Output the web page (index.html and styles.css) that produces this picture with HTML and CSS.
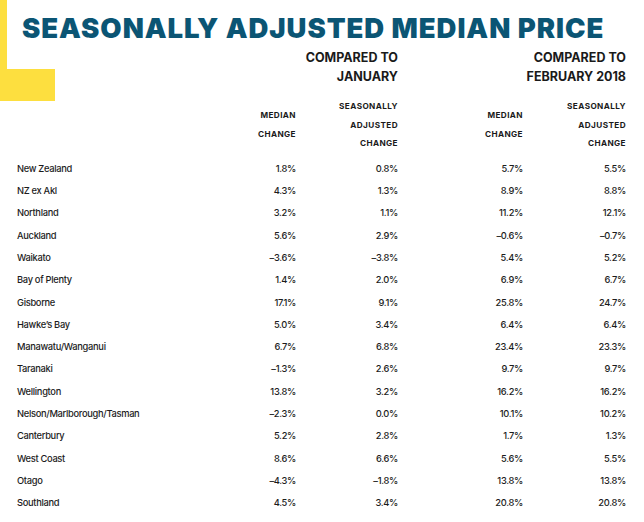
FILE: index.html
```html
<!DOCTYPE html>
<html lang="en">
<head>
<meta charset="utf-8">
<title>Seasonally adjusted median price</title>
<link rel="stylesheet" href="styles.css">
</head>
<body>
<main class="page">
  <div class="accent"></div>
  <h1 class="title">SEASONALLY ADJUSTED MEDIAN PRICE</h1>
  <div class="table">
    <div class="cell"></div>
    <div class="group g1">COMPARED TO<br>JANUARY</div>
    <div class="group g2">COMPARED TO<br>FEBRUARY 2018</div>

    <div class="cell sub-gap"></div>
    <div class="sub mid">MEDIAN<br>CHANGE</div>
    <div class="sub">SEASONALLY<br>ADJUSTED<br>CHANGE</div>
    <div class="sub mid">MEDIAN<br>CHANGE</div>
    <div class="sub">SEASONALLY<br>ADJUSTED<br>CHANGE</div>

    <div class="lbl">New Zealand</div><div class="num">1.8%</div><div class="num">0.8%</div><div class="num">5.7%</div><div class="num">5.5%</div>
    <div class="lbl">NZ ex Akl</div><div class="num">4.3%</div><div class="num">1.3%</div><div class="num">8.9%</div><div class="num">8.8%</div>
    <div class="lbl">Northland</div><div class="num">3.2%</div><div class="num">1.1%</div><div class="num">11.2%</div><div class="num">12.1%</div>
    <div class="lbl">Auckland</div><div class="num">5.6%</div><div class="num">2.9%</div><div class="num">–0.6%</div><div class="num">–0.7%</div>
    <div class="lbl">Waikato</div><div class="num">–3.6%</div><div class="num">–3.8%</div><div class="num">5.4%</div><div class="num">5.2%</div>
    <div class="lbl">Bay of Plenty</div><div class="num">1.4%</div><div class="num">2.0%</div><div class="num">6.9%</div><div class="num">6.7%</div>
    <div class="lbl">Gisborne</div><div class="num">17.1%</div><div class="num">9.1%</div><div class="num">25.8%</div><div class="num">24.7%</div>
    <div class="lbl">Hawke’s Bay</div><div class="num">5.0%</div><div class="num">3.4%</div><div class="num">6.4%</div><div class="num">6.4%</div>
    <div class="lbl">Manawatu/Wanganui</div><div class="num">6.7%</div><div class="num">6.8%</div><div class="num">23.4%</div><div class="num">23.3%</div>
    <div class="lbl">Taranaki</div><div class="num">–1.3%</div><div class="num">2.6%</div><div class="num">9.7%</div><div class="num">9.7%</div>
    <div class="lbl">Wellington</div><div class="num">13.8%</div><div class="num">3.2%</div><div class="num">16.2%</div><div class="num">16.2%</div>
    <div class="lbl">Nelson/Marlborough/Tasman</div><div class="num">–2.3%</div><div class="num">0.0%</div><div class="num">10.1%</div><div class="num">10.2%</div>
    <div class="lbl">Canterbury</div><div class="num">5.2%</div><div class="num">2.8%</div><div class="num">1.7%</div><div class="num">1.3%</div>
    <div class="lbl">West Coast</div><div class="num">8.6%</div><div class="num">6.6%</div><div class="num">5.6%</div><div class="num">5.5%</div>
    <div class="lbl">Otago</div><div class="num">–4.3%</div><div class="num">–1.8%</div><div class="num">13.8%</div><div class="num">13.8%</div>
    <div class="lbl">Southland</div><div class="num">4.5%</div><div class="num">3.4%</div><div class="num">20.8%</div><div class="num">20.8%</div>
  </div>
</main>
</body>
</html>
```
FILE: styles.css
```css
html, body {
  margin: 0;
  padding: 0;
  background: #ffffff;
}

.page {
  position: relative;
  width: 644px;
  height: 522px;
  box-sizing: border-box;
  padding: 13px 18px 0 17px;
  font-family: Inter, "Liberation Sans", sans-serif;
  color: #1c1c1c;
  overflow: hidden;
}

.accent {
  position: absolute;
  left: 0;
  top: 0;
  width: 7px;
  height: 101px;
  background: #fddf3f;
}
.accent::after {
  content: "";
  position: absolute;
  left: 0;
  top: 69px;
  width: 55px;
  height: 32px;
  background: #fddf3f;
}

.title {
  position: relative;
  margin: 0 0 5px 5px;
  font-size: 27.5px;
  line-height: 30px;
  font-weight: 900;
  color: #0b5574;
  letter-spacing: 0.95px;
  white-space: nowrap;
}

.table {
  display: grid;
  grid-template-columns: 196px 83px 102px 125px 103px;
}

.group {
  font-size: 12.5px;
  line-height: 19px;
  font-weight: 700;
  text-align: right;
  color: #1a1a1a;
}
.g1 { grid-column: 2 / 4; }
.g2 { grid-column: 4 / 6; }

.sub-gap { margin-top: 11px; }

.sub {
  margin-top: 11px;
  margin-bottom: 5px;
  font-size: 8.2px;
  line-height: 18.6px;
  font-weight: 700;
  letter-spacing: 0.4px;
  text-align: right;
  color: #1a1a1a;
}
.sub.mid { align-self: center; }

.lbl, .num {
  height: 22.3px;
  line-height: 22.3px;
  font-size: 9.3px;
  font-weight: 500;
  white-space: nowrap;
}
.lbl {
  letter-spacing: -0.3px;
}
.num {
  text-align: right;
  letter-spacing: -0.3px;
}
```
